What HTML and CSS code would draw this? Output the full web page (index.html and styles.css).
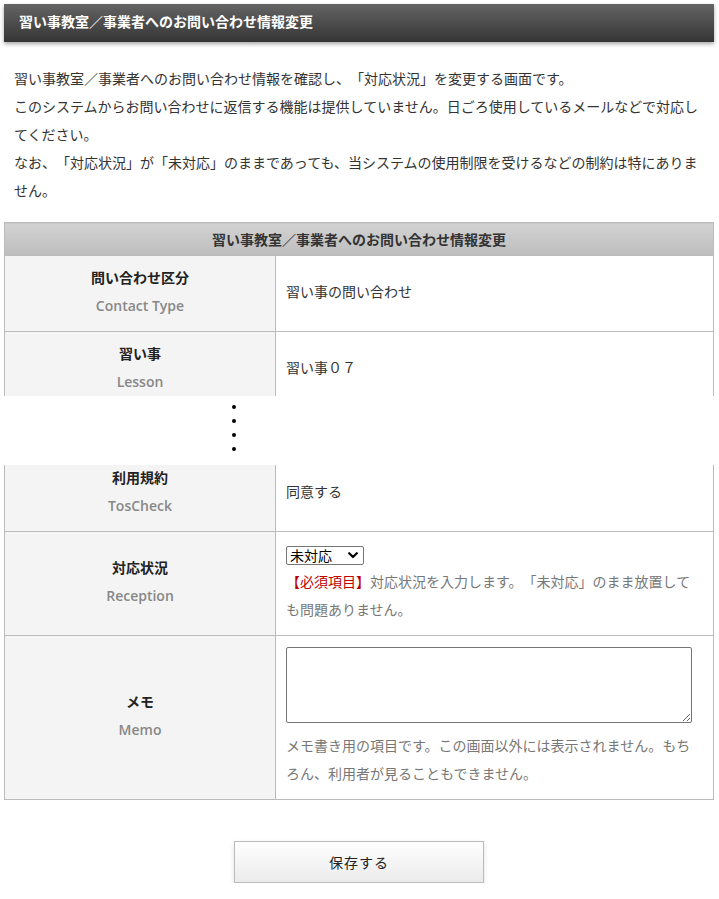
FILE: index.html
```html
<!DOCTYPE html>
<html lang="ja">
<head>
<meta charset="utf-8">
<title>習い事教室／事業者へのお問い合わせ情報変更</title>
<link rel="stylesheet" href="styles.css">
</head>
<body>
<div class="page">
  <h1 class="titlebar">習い事教室／事業者へのお問い合わせ情報変更</h1>
  <p class="intro">習い事教室／事業者へのお問い合わせ情報を確認し、「対応状況」を変更する画面です。<br>このシステムからお問い合わせに返信する機能は提供していません。日ごろ使用しているメールなどで対応してください。<br>なお、「対応状況」が「未対応」のままであっても、当システムの使用制限を受けるなどの制約は特にありません。</p>

  <div class="cut cut-top">
    <table class="form">
      <colgroup><col class="col-label"><col class="col-value"></colgroup>
      <tr><th class="head" colspan="2">習い事教室／事業者へのお問い合わせ情報変更</th></tr>
      <tr>
        <th class="label"><span class="ja">問い合わせ区分</span><span class="en">Contact Type</span></th>
        <td class="value">習い事の問い合わせ</td>
      </tr>
      <tr>
        <th class="label"><span class="ja">習い事</span><span class="en">Lesson</span></th>
        <td class="value">習い事０７</td>
      </tr>
    </table>
  </div>

  <div class="ellipsis">
    <span class="dot"></span><span class="dot"></span><span class="dot"></span><span class="dot"></span>
  </div>

  <div class="cut cut-bottom">
    <table class="form shifted">
      <colgroup><col class="col-label"><col class="col-value"></colgroup>
      <tr>
        <th class="label"><span class="ja">利用規約</span><span class="en">TosCheck</span></th>
        <td class="value">同意する</td>
      </tr>
      <tr>
        <th class="label"><span class="ja">対応状況</span><span class="en">Reception</span></th>
        <td class="value">
          <div class="select-line">
            <span class="select-wrap">
              <select class="status">
                <option>未対応</option>
                <option>対応中</option>
                <option>対応済</option>
              </select>
              <svg class="chevron" width="10" height="7" viewBox="0 0 10 7" aria-hidden="true"><path d="M1.2 1.2 L5 5 L8.8 1.2" fill="none" stroke="#000" stroke-width="2.2" stroke-linecap="round" stroke-linejoin="round"/></svg>
            </span>
          </div>
          <p class="note"><span class="required">【必須項目】</span>対応状況を入力します。「未対応」のまま放置しても問題ありません。</p>
        </td>
      </tr>
      <tr>
        <th class="label"><span class="ja">メモ</span><span class="en">Memo</span></th>
        <td class="value">
          <textarea class="memo"></textarea>
          <p class="note">メモ書き用の項目です。この画面以外には表示されません。もちろん、利用者が見ることもできません。</p>
        </td>
      </tr>
    </table>
  </div>

  <div class="actions">
    <button class="save" type="button">保存する</button>
  </div>
</div>
</body>
</html>
```

FILE: styles.css
```css
html, body {
  margin: 0;
  padding: 0;
  background: #ffffff;
}

body {
  font-family: "Open Sans", "Noto Sans CJK JP", sans-serif;
  font-size: 14px;
  color: #333333;
  text-spacing-trim: space-all;
}

.page {
  width: 710px;
  padding: 4px 0 0 4px;
}

.titlebar {
  margin: 0;
  height: 38px;
  line-height: 36px;
  padding: 0 15px;
  font-size: 14px;
  font-weight: bold;
  color: #ffffff;
  background: linear-gradient(#646464, #353535);
  box-shadow: 0 2px 4px rgba(0, 0, 0, 0.35);
}

.intro {
  margin: 23px 0 0;
  padding: 0 10px;
  line-height: 28px;
  font-size: 14px;
  color: #333333;
}

.cut {
  overflow: hidden;
}

.cut-top {
  margin-top: 17px;
  height: 174px;
}

.form {
  width: 710px;
  border-collapse: collapse;
  table-layout: fixed;
}

.col-label {
  width: 271px;
}

.shifted {
  margin-top: -10px;
}

.form th,
.form td {
  border: 1px solid #bbbbbb;
}

.head {
  height: 32px;
  padding: 0;
  line-height: 31px;
  font-size: 14px;
  font-weight: bold;
  color: #333333;
  background: linear-gradient(#d3d3d3, #bdbdbd);
}

.label {
  padding: 8px 10px 11px;
  background: #f4f4f4;
  text-align: center;
  vertical-align: middle;
  line-height: 28px;
  font-weight: bold;
}

.label .ja {
  display: block;
  color: #222222;
}

.label .en {
  display: block;
  font-family: "Open Sans", sans-serif;
  font-weight: 600;
  font-size: 14px;
  color: #888888;
}

.value {
  padding: 8px 10px 11px;
  line-height: 28px;
  vertical-align: middle;
  text-align: left;
  color: #333333;
  background: #ffffff;
}

.select-line {
  height: 28px;
  box-sizing: border-box;
  padding-top: 6px;
}

.select-wrap {
  position: relative;
  display: block;
  width: 78px;
  height: 19px;
}

.status {
  appearance: none;
  -webkit-appearance: none;
  display: block;
  box-sizing: border-box;
  width: 78px;
  height: 19px;
  margin: 0;
  padding: 0 0 0 3px;
  font-family: "Noto Sans CJK JP", sans-serif;
  font-size: 14px;
  line-height: 17px;
  color: #000000;
  border: 1px solid #767676;
  border-radius: 2px;
  background: #ffffff;
}

.chevron {
  position: absolute;
  right: 6px;
  top: 6px;
  pointer-events: none;
}

.note {
  margin: 0;
  line-height: 28px;
  color: #777777;
}

.required {
  color: #c00000;
}

.memo {
  display: block;
  box-sizing: border-box;
  width: 406px;
  height: 76px;
  margin: 3px 0 9px;
  border: 1px solid #767676;
  border-radius: 2px;
  font-family: "Noto Sans CJK JP", sans-serif;
  font-size: 13px;
}

.ellipsis {
  height: 69px;
  box-sizing: border-box;
  padding: 9px 0 0 228px;
  display: flex;
  flex-direction: column;
  gap: 10px;
}

.dot {
  display: block;
  width: 4px;
  height: 4px;
  border-radius: 50%;
  background: #000000;
}

.actions {
  display: flex;
  justify-content: center;
  margin-top: 41px;
}

.save {
  width: 250px;
  height: 42px;
  border: 1px solid #bbbbbb;
  background: linear-gradient(#ffffff, #ebebeb);
  box-shadow: 0 2px 5px rgba(0, 0, 0, 0.12);
  font-family: "Noto Sans CJK JP", sans-serif;
  font-size: 14px;
  letter-spacing: 1px;
  color: #222222;
  cursor: pointer;
}
```
